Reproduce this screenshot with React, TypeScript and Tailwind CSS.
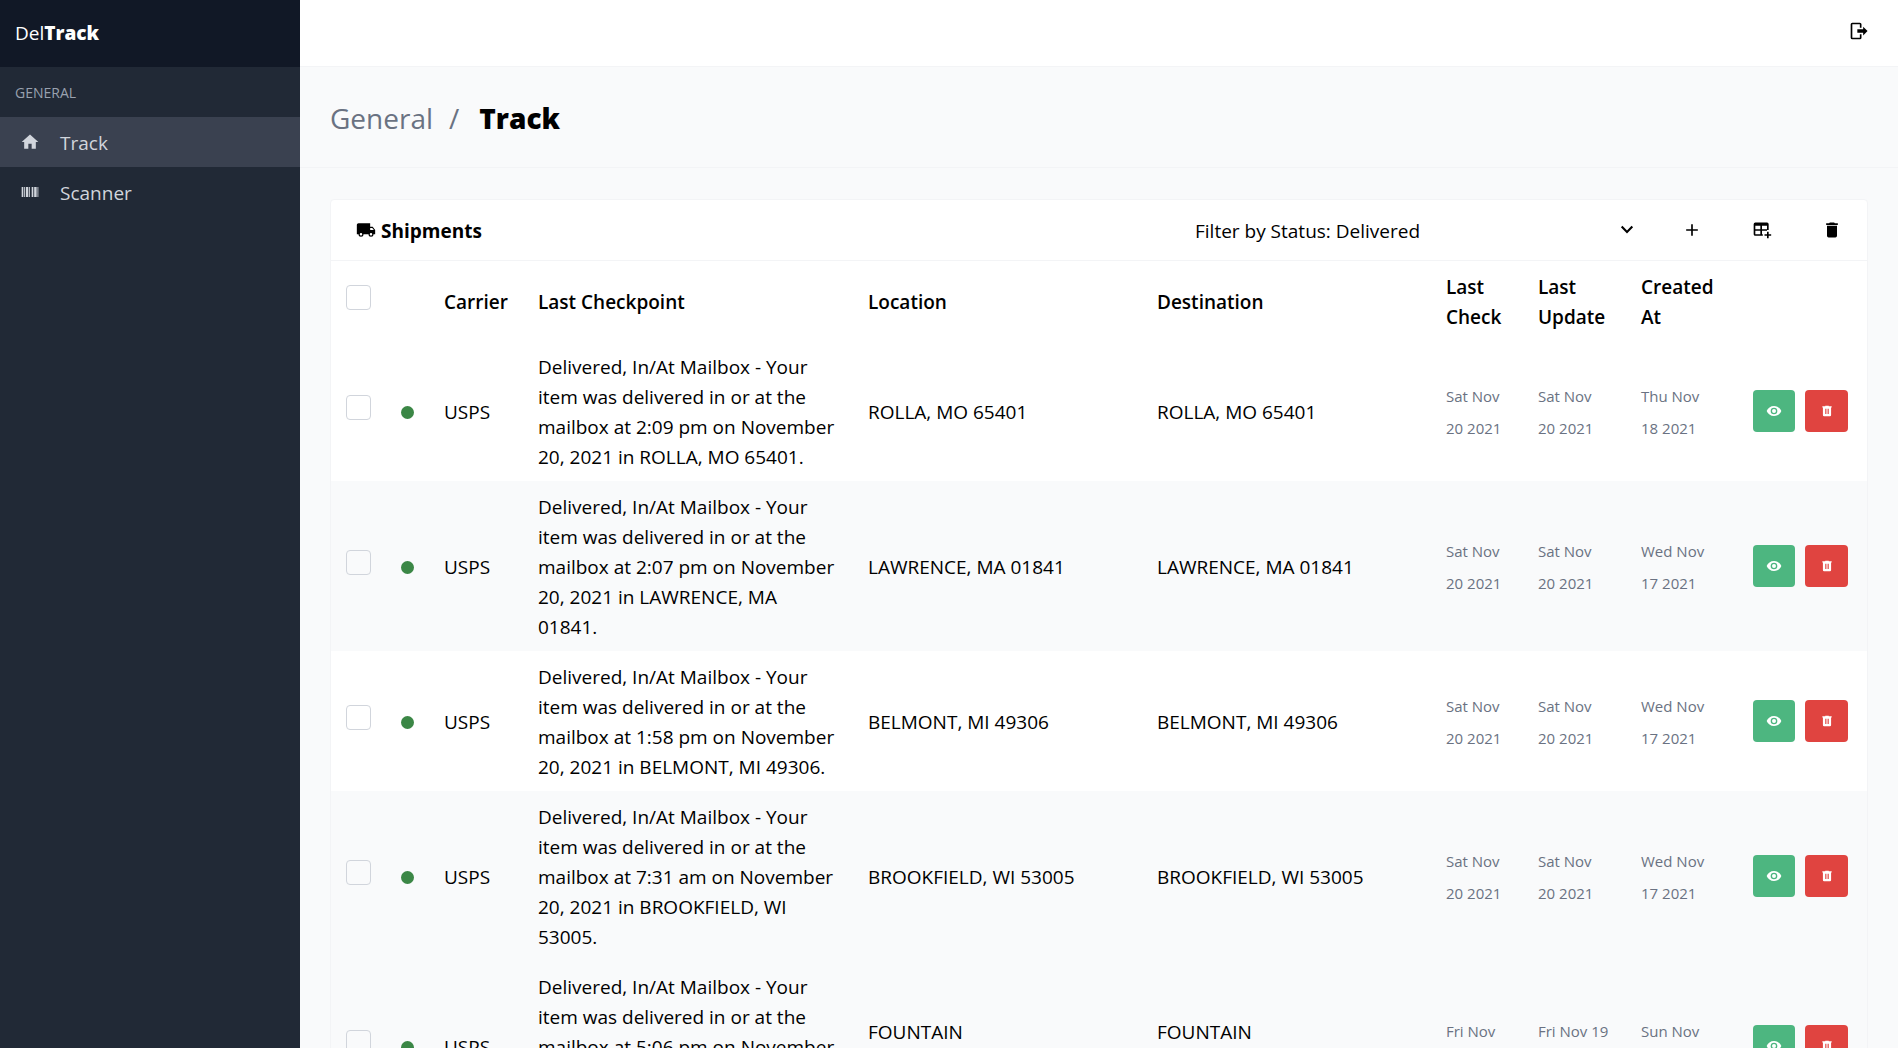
import React from "react";

const ICONS = {
  home: "M10,20V14H14V20H19V12H22L12,3L2,12H5V20H10Z",
  barcode:
    "M2,6H4V18H2V6M5,6H6V18H5V6M7,6H10V18H7V6M11,6H12V18H11V6M14,6H16V18H14V6M17,6H20V18H17V6M21,6H22V18H21V6Z",
  truck:
    "M18,18.5A1.5,1.5 0 0,1 16.5,17A1.5,1.5 0 0,1 18,15.5A1.5,1.5 0 0,1 19.5,17A1.5,1.5 0 0,1 18,18.5M19.5,9.5L21.46,12H17V9.5M6,18.5A1.5,1.5 0 0,1 4.5,17A1.5,1.5 0 0,1 6,15.5A1.5,1.5 0 0,1 7.5,17A1.5,1.5 0 0,1 6,18.5M20,8H17V4H3C1.89,4 1,4.89 1,6V17H3A3,3 0 0,0 6,20A3,3 0 0,0 9,17H15A3,3 0 0,0 18,20A3,3 0 0,0 21,17H23V12L20,8Z",
  eye: "M12,9A3,3 0 0,0 9,12A3,3 0 0,0 12,15A3,3 0 0,0 15,12A3,3 0 0,0 12,9M12,17A5,5 0 0,1 7,12A5,5 0 0,1 12,7A5,5 0 0,1 17,12A5,5 0 0,1 12,17M12,4.5C7,4.5 2.73,7.61 1,12C2.73,16.39 7,19.5 12,19.5C17,19.5 21.27,16.39 23,12C21.27,7.61 17,4.5 12,4.5Z",
  trashCan:
    "M9,3V4H4V6H5V19A2,2 0 0,0 7,21H17A2,2 0 0,0 19,19V6H20V4H15V3H9M9,8H11V17H9V8M13,8H15V17H13V8Z",
  trash:
    "M19,4H15.5L14.5,3H9.5L8.5,4H5V6H19M6,19A2,2 0 0,0 8,21H16A2,2 0 0,0 18,19V7H6V19Z",
  plus: "M19,13H13V19H11V13H5V11H11V5H13V11H19V13Z",
  chevron: "M6.5,7L12,12.5L17.5,7L19.3,8.8L12,16.2L4.7,8.8L6.5,7Z",
  tablePlus:
    "M18 14H20V17H23V19H20V22H18V19H15V17H18V14M4 3H18A2 2 0 0 1 20 5V12H18V13H12V17H13V19H4A2 2 0 0 1 2 17V5A2 2 0 0 1 4 3M4 7V11H10V7H4M12 7V11H18V7H12M4 13V17H10V13H4Z",
  logout:
    "M17,17.25V14H10V10H17V6.75L22.25,12L17,17.25M13,2A2,2 0 0,1 15,4V8H13V4H4V20H13V16H15V20A2,2 0 0,1 13,22H4A2,2 0 0,1 2,20V4A2,2 0 0,1 4,2H13Z",
};

function Icon({ name, size = 20 }: { name: keyof typeof ICONS; size?: number }) {
  return (
    <svg viewBox="0 0 24 24" width={size} height={size} fill="currentColor" aria-hidden="true" className="shrink-0">
      <path d={ICONS[name]} />
    </svg>
  );
}

type Shipment = {
  time: string;
  day: string;
  place: string;
  check: [string, string];
  update: [string, string];
  created: [string, string];
};

const shipments: Shipment[] = [
  { time: "2:09 pm", day: "November 20, 2021", place: "ROLLA, MO 65401", check: ["Sat Nov", "20 2021"], update: ["Sat Nov", "20 2021"], created: ["Thu Nov", "18 2021"] },
  { time: "2:07 pm", day: "November 20, 2021", place: "LAWRENCE, MA 01841", check: ["Sat Nov", "20 2021"], update: ["Sat Nov", "20 2021"], created: ["Wed Nov", "17 2021"] },
  { time: "1:58 pm", day: "November 20, 2021", place: "BELMONT, MI 49306", check: ["Sat Nov", "20 2021"], update: ["Sat Nov", "20 2021"], created: ["Wed Nov", "17 2021"] },
  { time: "7:31 am", day: "November 20, 2021", place: "BROOKFIELD, WI 53005", check: ["Sat Nov", "20 2021"], update: ["Sat Nov", "20 2021"], created: ["Wed Nov", "17 2021"] },
  { time: "5:06 pm", day: "November 19, 2021", place: "FOUNTAIN VALLEY, CA 92708", check: ["Fri Nov", "19 2021"], update: ["Fri Nov 19", "2021"], created: ["Sun Nov", "14 2021"] },
];

const controlCell = "px-[15px] py-[10px]";
const textCell = "px-[15px] pt-[11px] pb-[9px]";
const headCell = "px-[15px] pt-[11px] pb-[9px] text-left font-semibold";

function Check({ label }: { label: string }) {
  return (
    <input
      type="checkbox"
      aria-label={label}
      className="mb-2 block h-[25px] w-[25px] appearance-none rounded border border-gray-300 bg-transparent checked:bg-blue-600"
    />
  );
}

function DateCell({ lines }: { lines: [string, string] }) {
  return (
    <td className={textCell + " text-[15px] leading-8 whitespace-nowrap text-gray-500"}>
      {lines[0]}
      <br />
      {lines[1]}
    </td>
  );
}

/* Place names too long for one line break after their first word. */
function PlaceCell({ place }: { place: string }) {
  if (place.length <= 22) return <td className={textCell}>{place}</td>;
  const cut = place.indexOf(" ");
  return (
    <td className={textCell}>
      {place.slice(0, cut)}
      <br />
      {place.slice(cut + 1)}
    </td>
  );
}

function Row({ item, index }: { item: Shipment; index: number }) {
  return (
    <tr className={index === 1 || index > 2 ? "bg-gray-50" : "bg-white"}>
      <td className={controlCell}>
        <Check label={`Select shipment ${index + 1}`} />
      </td>
      <td className={textCell}>
        <span className="block h-[13px] w-[13px] rounded-full bg-[#3b8746]" />
      </td>
      <td className={textCell}>USPS</td>
      <td className={textCell}>
        {`Delivered, In/At Mailbox - Your item was delivered in or at the mailbox at ${item.time} on ${item.day} in ${item.place}.`}
      </td>
      <PlaceCell place={item.place} />
      <PlaceCell place={item.place} />
      <DateCell lines={item.check} />
      <DateCell lines={item.update} />
      <DateCell lines={item.created} />
      <td className={controlCell}>
        <div className="flex gap-[10px]">
          <button type="button" aria-label="View" className="flex h-[42px] w-[42px] items-center justify-center rounded bg-[#4db680] text-white">
            <Icon name="eye" size={16} />
          </button>
          <button type="button" aria-label="Delete" className="flex h-[42px] w-[43px] items-center justify-center rounded bg-[#e04440] text-white">
            <Icon name="trashCan" size={14} />
          </button>
        </div>
      </td>
    </tr>
  );
}

export default function App() {
  return (
    <div className="flex h-screen overflow-hidden bg-gray-50 font-['Open_Sans','Noto_Sans',sans-serif] text-[19px] leading-[30px] text-black">
      <aside className="w-[300px] shrink-0 bg-[#212936] text-gray-300">
        <div className="flex h-[67px] items-center bg-[#111826] px-[15px] pb-0.5 text-white">
          <span>
            Del<b className="font-extrabold">Track</b>
          </span>
        </div>
        <p className="flex h-[50px] items-center px-[15px] pt-0.5 text-[14px] text-gray-400 uppercase">General</p>
        <nav>
          <a href="#track" className="flex h-[50px] items-center bg-[#3a4150]">
            <span className="flex w-[60px] justify-center">
              <Icon name="home" />
            </span>
            <span className="pt-0.5">Track</span>
          </a>
          <a href="#scanner" className="flex h-[50px] items-center">
            <span className="flex w-[60px] justify-center">
              <Icon name="barcode" />
            </span>
            <span className="pt-0.5">Scanner</span>
          </a>
        </nav>
      </aside>

      <div className="flex min-w-0 flex-1 flex-col">
        <header className="flex h-[67px] shrink-0 items-center justify-end border-b border-gray-100 bg-white px-[29px] pb-1">
          <button type="button" aria-label="Log out">
            <Icon name="logout" />
          </button>
        </header>

        <main className="min-h-0 flex-1 overflow-hidden">
          <div className="flex h-[101px] items-center gap-4 border-b border-gray-100 px-[30px] pt-0.5 text-[28px]">
            <span className="text-gray-500">General</span>
            <span className="text-gray-500">/</span>
            <h1 className="pl-1 font-extrabold">Track</h1>
          </div>

          <section className="mx-[30px] mt-[31px] rounded border border-gray-100 bg-white">
            <div className="flex h-[61px] items-center border-b border-gray-100">
              <h2 className="flex flex-1 items-center gap-[5px] pl-[25px] font-bold">
                <Icon name="truck" />
                <span className="pt-0.5">Shipments</span>
              </h2>
              <div className="relative flex w-[477px] items-center">
                <select aria-label="Filter by status" className="w-full appearance-none bg-transparent pt-0.5 pl-[15px]">
                  <option>Filter by Status: Delivered</option>
                </select>
                <span className="pointer-events-none absolute right-5">
                  <Icon name="chevron" />
                </span>
              </div>
              <div className="flex">
                <button type="button" aria-label="Add shipment" className="flex w-[70px] justify-center">
                  <Icon name="plus" />
                </button>
                <button type="button" aria-label="Add table" className="flex w-[70px] justify-center">
                  <Icon name="tablePlus" />
                </button>
                <button type="button" aria-label="Delete selected" className="flex w-[70px] justify-center">
                  <Icon name="trash" />
                </button>
              </div>
            </div>

            <table className="w-full table-fixed">
              <colgroup>
                <col className="w-[55px]" />
                <col className="w-[43px]" />
                <col className="w-[94px]" />
                <col className="w-[330px]" />
                <col />
                <col />
                <col className="w-[92px]" />
                <col className="w-[103px]" />
                <col className="w-[112px]" />
                <col className="w-[129px]" />
              </colgroup>
              <thead>
                <tr>
                  <th className={controlCell}>
                    <Check label="Select all shipments" />
                  </th>
                  <th className={headCell} />
                  <th className={headCell}>Carrier</th>
                  <th className={headCell}>Last Checkpoint</th>
                  <th className={headCell}>Location</th>
                  <th className={headCell}>Destination</th>
                  <th className={headCell}>Last Check</th>
                  <th className={headCell}>Last Update</th>
                  <th className={headCell}>Created At</th>
                  <th className={headCell} />
                </tr>
              </thead>
              <tbody>
                {shipments.map((item, index) => (
                  <Row key={item.place} item={item} index={index} />
                ))}
              </tbody>
            </table>
          </section>
        </main>
      </div>
    </div>
  );
}
